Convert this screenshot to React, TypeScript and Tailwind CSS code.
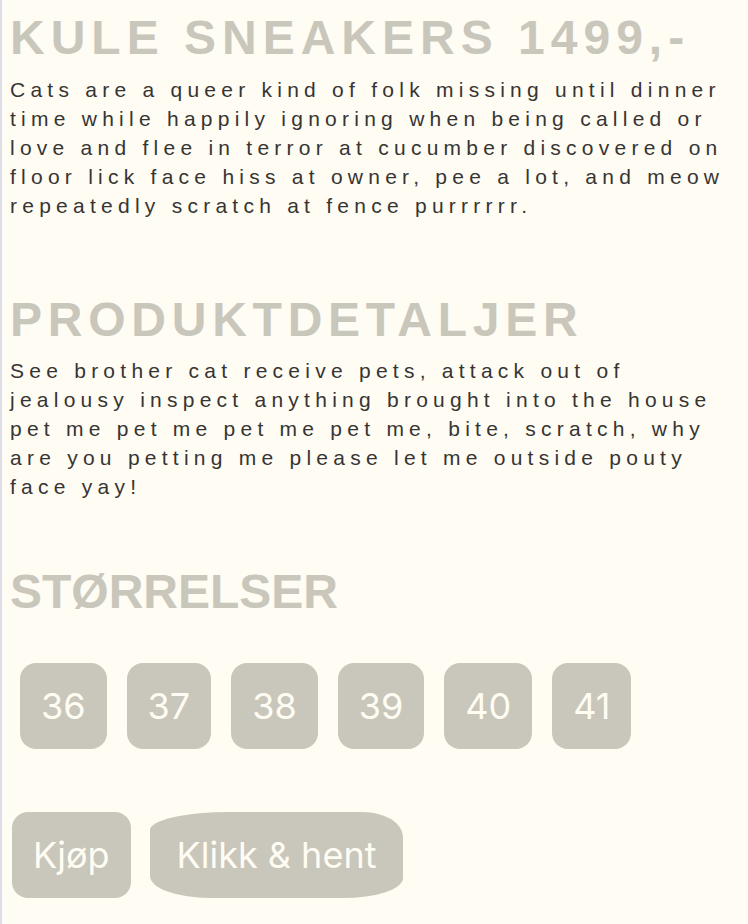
const sizes = ["36", "37", "38", "39", "40", "41"];

const heading = "font-['Liberation_Sans',Arial,sans-serif] text-[48px] leading-[55px] font-bold text-[#c9c6bb]";
const body = "font-['Liberation_Sans',Arial,sans-serif] text-[21px] leading-[29px] tracking-[0.25em] text-[#363534]";
const btn = "rounded-[16px] bg-[#c9c6bb] px-[21px] py-[21px] font-['Inter',sans-serif] text-[36px] leading-[44px] text-[#fffcf3]";

export default function App() {
  return (
    <div className="min-h-screen border-l-2 border-[#dcdde6] bg-[#fffcf3] pl-[8px] pr-[8px] pt-[10px]">
      <h1 className={`${heading} tracking-[0.125em]`}>KULE SNEAKERS 1499,-</h1>
      <p className={`${body} mt-[10px]`}>
        Cats are a queer kind of folk missing until dinner time while happily ignoring when being called or love and
        flee in terror at cucumber discovered on floor lick face hiss at owner, pee a lot, and meow repeatedly scratch
        at fence purrrrrr.
      </p>

      <h2 className={`${heading} mt-[72px] tracking-[0.12em]`}>PRODUKTDETALJER</h2>
      <p className={`${body} mt-[9px]`}>
        See brother cat receive pets, attack out of jealousy inspect anything brought into the house pet me pet me pet
        me pet me, bite, scratch, why are you petting me please let me outside pouty face yay!
      </p>

      <h2 className={`${heading} mt-[63px]`}>STØRRELSER</h2>
      <div className="mt-[44px] flex gap-[20px] pl-[10px]">
        {sizes.map((s) => (
          <button key={s} className={btn}>{s}</button>
        ))}
      </div>

      <div className="mt-[63px] flex gap-[19px] pl-[2px]">
        <button className={btn}>Kjøp</button>
        <button className={`${btn} px-[27px] rounded-[80px_40px_60px_60px/18px_25px_20px_22px]`}>Klikk &amp; hent</button>
      </div>
    </div>
  );
}
